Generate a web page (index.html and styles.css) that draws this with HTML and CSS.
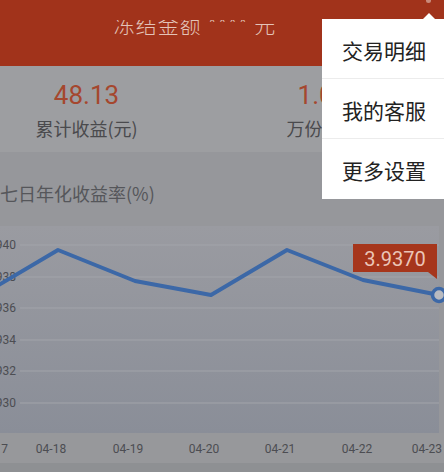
FILE: index.html
```html
<!DOCTYPE html>
<html lang="zh-CN">
<head>
    <meta charset="UTF-8">
    <meta name="viewport" content="width=device-width, initial-scale=1.0">
    <title>收益详情</title>
    <link rel="stylesheet" href="styles.css">
</head>
<body>
    <div class="screen">
        <div class="top-bar">
            <div class="freeze-clip">
                <div class="freeze-text">冻结金额 **** 元</div>
            </div>
        </div>

        <div class="stats">
            <div class="stat">
                <div class="stat-value">48.13</div>
                <div class="stat-label">累计收益(元)</div>
            </div>
            <div class="stat">
                <div class="stat-value">1.0532</div>
                <div class="stat-label">万份收益(元)</div>
            </div>
        </div>

        <div class="chart-section">
            <div class="chart-title">七日年化收益率(%)</div>
            <svg class="chart" width="444" height="266" viewBox="0 0 444 266">
                <defs>
                    <linearGradient id="plotBg" x1="0" y1="0" x2="0" y2="1">
                        <stop offset="0" stop-color="#9a9ba1"/>
                        <stop offset="1" stop-color="#8a8e98"/>
                    </linearGradient>
                </defs>
                <rect x="0" y="20" width="439" height="207" fill="url(#plotBg)"/>
                <rect x="0" y="227" width="444" height="30" fill="#97989b"/>
                <rect x="0" y="257" width="444" height="9" fill="#8e9093"/>

                <g stroke="#a2a4aa" stroke-width="1">
                    <line x1="20" y1="39" x2="439" y2="39"/>
                    <line x1="20" y1="71" x2="439" y2="71"/>
                    <line x1="20" y1="102" x2="439" y2="102"/>
                    <line x1="20" y1="134" x2="439" y2="134"/>
                    <line x1="20" y1="165" x2="439" y2="165"/>
                    <line x1="20" y1="197" x2="439" y2="197"/>
                </g>

                <g class="axis-label" text-anchor="end">
                    <text x="16" y="43">3.940</text>
                    <text x="16" y="75">3.938</text>
                    <text x="16" y="106">3.936</text>
                    <text x="16" y="138">3.934</text>
                    <text x="16" y="169">3.932</text>
                    <text x="16" y="201">3.930</text>
                </g>

                <polyline points="-20,90 58,44 135,75 211,89 287,44 363,74 439,89"
                          fill="none" stroke="#3c68a7" stroke-width="4" stroke-linejoin="round"/>
                <circle cx="439" cy="89" r="6.5" fill="#b8bac0" stroke="#3c68a7" stroke-width="3.5"/>

                <rect x="353" y="38" width="84" height="28" fill="#a6361c"/>
                <polygon points="428,66 437,66 437,73" fill="#a6361c"/>
                <text class="tip-text" x="395" y="60" text-anchor="middle">3.9370</text>

                <g class="axis-label">
                    <text x="8" y="247" text-anchor="end">04-17</text>
                    <text x="51" y="247" text-anchor="middle">04-18</text>
                    <text x="128" y="247" text-anchor="middle">04-19</text>
                    <text x="204" y="247" text-anchor="middle">04-20</text>
                    <text x="280" y="247" text-anchor="middle">04-21</text>
                    <text x="357" y="247" text-anchor="middle">04-22</text>
                    <text x="442" y="247" text-anchor="end">04-23</text>
                </g>
            </svg>
        </div>

        <!-- overflow menu, opened over the dimmed page -->
        <span class="menu-dot"></span>
        <div class="menu">
            <div class="menu-item">交易明细</div>
            <div class="menu-item">我的客服</div>
            <div class="menu-item">更多设置</div>
        </div>
    </div>
</body>
</html>
```

FILE: styles.css
```css
* {
    margin: 0;
    padding: 0;
    box-sizing: border-box;
}

body {
    width: 444px;
    height: 472px;
    overflow: hidden;
    background: #8e9093;
    font-family: Roboto, "Noto Sans CJK SC", sans-serif;
}

.screen {
    position: relative;
    width: 444px;
    height: 472px;
    overflow: hidden;
}

.top-bar {
    height: 66px;
    background: #a1331b;
    padding-top: 20px;
}

/* the title row is half hidden under the toolbar */
.freeze-clip {
    height: 15px;
    overflow: hidden;
}

.freeze-text {
    margin-top: -10px;
    margin-left: -54px;
    text-align: center;
    font-family: "Noto Sans CJK SC", sans-serif;
    font-size: 21px;
    font-weight: 300;
    line-height: 28px;
    letter-spacing: 1px;
    color: #e3c3b8;
}

.stats {
    display: grid;
    grid-template-columns: 1fr 1fr;
    width: 502px;
    height: 86px;
    margin-left: -39px;
    background: #9d9ea1;
}

.stat {
    text-align: center;
    padding-top: 14px;
}

.stat-value {
    font-size: 26px;
    line-height: 30px;
    color: #a5472e;
}

.stat-label {
    margin-top: 6px;
    font-family: "Noto Sans CJK SC", sans-serif;
    font-size: 18px;
    line-height: 24px;
    color: #4a4a4d;
}

.chart-section {
    height: 320px;
    background: #96979b;
}

.chart-title {
    padding-top: 28px;
    padding-left: 0;
    font-family: "Noto Sans CJK SC", sans-serif;
    font-size: 18px;
    line-height: 26px;
    color: #55565a;
}

.chart {
    display: block;
}

.axis-label text {
    font-family: Roboto, sans-serif;
    font-size: 12px;
    fill: #4c4d52;
}

.tip-text {
    font-family: Roboto, sans-serif;
    font-size: 20px;
    fill: #ebc5b7;
}

.menu-dot {
    position: absolute;
    left: 426px;
    top: 0;
    width: 5px;
    height: 3px;
    border-radius: 0 0 3px 3px;
    background: #c98b7c;
}

.menu {
    position: absolute;
    left: 322px;
    top: 19px;
    width: 122px;
    background: #fff;
}

.menu::before {
    content: "";
    position: absolute;
    top: -6px;
    left: 101px;
    border-left: 6px solid transparent;
    border-right: 6px solid transparent;
    border-bottom: 6px solid #fff;
}

.menu-item {
    height: 60px;
    padding-left: 20px;
    padding-top: 3px;
    font-family: "Noto Sans CJK SC", sans-serif;
    font-size: 21px;
    line-height: 57px;
    color: #222;
    border-bottom: 1px solid #ececec;
}

.menu-item:last-child {
    border-bottom: none;
}
```
